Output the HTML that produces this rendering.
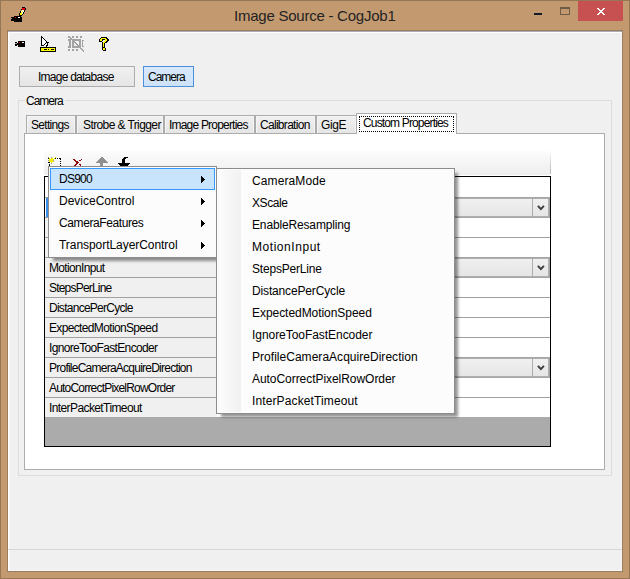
<!DOCTYPE html>
<html><head><meta charset="utf-8">
<style>
*{box-sizing:border-box;margin:0;padding:0}
html,body{width:630px;height:579px;overflow:hidden;background:#c39a70}
body{position:relative;font-family:"Liberation Sans",sans-serif;font-size:12px;color:#000}
.a{position:absolute}
.t{position:absolute;white-space:nowrap;line-height:normal;color:#000}
svg{position:absolute;display:block}
</style></head><body>
<div class="a" style="left:0px;top:0px;width:630px;height:579px;border:1px solid #957655"></div>
<svg class="a" style="left:10px;top:6px" width="17" height="16" shape-rendering="crispEdges"><rect x="12" y="1" width="3" height="1" fill="#000"/><rect x="15" y="1" width="1" height="1" fill="#999"/><rect x="12" y="2" width="3" height="1" fill="#e00"/><rect x="15" y="2" width="1" height="1" fill="#000"/><rect x="11" y="3" width="1" height="1" fill="#000"/><rect x="12" y="3" width="3" height="1" fill="#e00"/><rect x="15" y="3" width="1" height="1" fill="#000"/><rect x="12" y="4" width="2" height="1" fill="#fff"/><rect x="14" y="4" width="1" height="1" fill="#000"/><rect x="10" y="5" width="1" height="1" fill="#000"/><rect x="11" y="5" width="1" height="1" fill="#fff"/><rect x="12" y="5" width="1" height="1" fill="#ff0"/><rect x="13" y="5" width="1" height="1" fill="#fff"/><rect x="14" y="5" width="1" height="1" fill="#000"/><rect x="10" y="6" width="1" height="1" fill="#000"/><rect x="11" y="6" width="1" height="1" fill="#ff0"/><rect x="12" y="6" width="1" height="1" fill="#fff"/><rect x="13" y="6" width="1" height="1" fill="#000"/><rect x="9" y="7" width="1" height="1" fill="#000"/><rect x="10" y="7" width="2" height="1" fill="#ff0"/><rect x="12" y="7" width="1" height="1" fill="#fff"/><rect x="13" y="7" width="1" height="1" fill="#000"/><rect x="9" y="8" width="1" height="1" fill="#000"/><rect x="10" y="8" width="2" height="1" fill="#ff0"/><rect x="12" y="8" width="1" height="1" fill="#000"/><rect x="9" y="9" width="3" height="1" fill="#000"/><rect x="4" y="10" width="7" height="1" fill="#000"/><rect x="11" y="10" width="1" height="1" fill="#999"/><rect x="1" y="11" width="4" height="1" fill="#000"/><rect x="5" y="11" width="1" height="1" fill="#e00"/><rect x="6" y="11" width="2" height="1" fill="#000"/><rect x="8" y="11" width="2" height="1" fill="#fff"/><rect x="10" y="11" width="2" height="1" fill="#000"/><rect x="1" y="12" width="1" height="1" fill="#999"/><rect x="2" y="12" width="10" height="1" fill="#000"/><rect x="1" y="13" width="11" height="1" fill="#000"/><rect x="1" y="14" width="11" height="1" fill="#000"/><rect x="4" y="15" width="8" height="1" fill="#000"/></svg>
<div class="t" style="left:234px;top:7px;font-size:15px;letter-spacing:-0.24px;color:#232323">Image Source - CogJob1</div>
<div class="a" style="left:534px;top:13px;width:8px;height:2px;background:#141a26"></div>
<div class="a" style="left:560px;top:7px;width:10px;height:8px;border:1px solid #6e5c47;border-top-width:2px"></div>
<div class="a" style="left:578px;top:1px;width:45px;height:20px;background:#c75050"></div>
<svg class="a" style="left:597px;top:8px" width="8" height="7" shape-rendering="crispEdges"><rect x="0" y="0" width="2" height="1" fill="#fff"/><rect x="6" y="0" width="2" height="1" fill="#fff"/><rect x="1" y="1" width="2" height="1" fill="#fff"/><rect x="5" y="1" width="2" height="1" fill="#fff"/><rect x="2" y="2" width="4" height="1" fill="#fff"/><rect x="3" y="3" width="2" height="1" fill="#fff"/><rect x="2" y="4" width="4" height="1" fill="#fff"/><rect x="1" y="5" width="2" height="1" fill="#fff"/><rect x="5" y="5" width="2" height="1" fill="#fff"/><rect x="0" y="6" width="2" height="1" fill="#fff"/><rect x="6" y="6" width="2" height="1" fill="#fff"/></svg>
<div class="a" style="left:7px;top:30px;width:616px;height:542px;border:1px solid #9c7d5c;background:#f0f0f0"></div>
<div class="a" style="left:8px;top:32px;width:614px;height:539px;border:1px solid #fff;border-right-color:#f5f6f9;border-bottom-color:#f5f6f9"></div>
<div class="a" style="left:8px;top:31px;width:614px;height:1px;background:#a9afb7"></div>
<div class="a" style="left:9px;top:33px;width:1px;height:537px;background:#f4f6f9"></div>
<svg class="a" style="left:12px;top:41px" width="13" height="6" shape-rendering="crispEdges"><rect x="6" y="0" width="7" height="1" fill="#000"/><rect x="3" y="1" width="2" height="1" fill="#000"/><rect x="6" y="1" width="1" height="1" fill="#000"/><rect x="7" y="1" width="1" height="1" fill="#e00"/><rect x="8" y="1" width="2" height="1" fill="#000"/><rect x="10" y="1" width="2" height="1" fill="#fff"/><rect x="12" y="1" width="1" height="1" fill="#000"/><rect x="3" y="2" width="2" height="1" fill="#999"/><rect x="5" y="2" width="8" height="1" fill="#000"/><rect x="3" y="3" width="10" height="1" fill="#000"/><rect x="3" y="4" width="2" height="1" fill="#000"/><rect x="6" y="4" width="7" height="1" fill="#000"/><rect x="6" y="5" width="7" height="1" fill="#000"/></svg>
<svg class="a" style="left:40px;top:36px" width="17" height="16" shape-rendering="crispEdges"><rect x="1" y="0" width="1" height="1" fill="#000"/><rect x="1" y="1" width="2" height="1" fill="#000"/><rect x="1" y="2" width="1" height="1" fill="#000"/><rect x="2" y="2" width="1" height="1" fill="#fff"/><rect x="3" y="2" width="1" height="1" fill="#000"/><rect x="1" y="3" width="1" height="1" fill="#000"/><rect x="2" y="3" width="2" height="1" fill="#fff"/><rect x="4" y="3" width="1" height="1" fill="#000"/><rect x="1" y="4" width="1" height="1" fill="#000"/><rect x="2" y="4" width="3" height="1" fill="#fff"/><rect x="5" y="4" width="1" height="1" fill="#000"/><rect x="1" y="5" width="1" height="1" fill="#000"/><rect x="2" y="5" width="4" height="1" fill="#fff"/><rect x="6" y="5" width="1" height="1" fill="#000"/><rect x="1" y="6" width="1" height="1" fill="#000"/><rect x="2" y="6" width="4" height="1" fill="#fff"/><rect x="6" y="6" width="3" height="1" fill="#000"/><rect x="1" y="7" width="1" height="1" fill="#000"/><rect x="2" y="7" width="3" height="1" fill="#fff"/><rect x="5" y="7" width="1" height="1" fill="#000"/><rect x="6" y="7" width="1" height="1" fill="#fff"/><rect x="7" y="7" width="1" height="1" fill="#000"/><rect x="1" y="8" width="1" height="1" fill="#000"/><rect x="2" y="8" width="2" height="1" fill="#fff"/><rect x="4" y="8" width="1" height="1" fill="#000"/><rect x="5" y="8" width="2" height="1" fill="#fff"/><rect x="7" y="8" width="1" height="1" fill="#000"/><rect x="1" y="9" width="3" height="1" fill="#000"/><rect x="5" y="9" width="1" height="1" fill="#fff"/><rect x="6" y="9" width="2" height="1" fill="#000"/><rect x="6" y="10" width="1" height="1" fill="#000"/><rect x="0" y="11" width="16" height="1" fill="#000"/><rect x="0" y="12" width="1" height="1" fill="#000"/><rect x="1" y="12" width="14" height="1" fill="#ff0"/><rect x="15" y="12" width="1" height="1" fill="#000"/><rect x="0" y="13" width="1" height="1" fill="#000"/><rect x="1" y="13" width="3" height="1" fill="#ff0"/><rect x="4" y="13" width="3" height="1" fill="#000"/><rect x="7" y="13" width="1" height="1" fill="#ff0"/><rect x="8" y="13" width="1" height="1" fill="#000"/><rect x="9" y="13" width="2" height="1" fill="#ff0"/><rect x="11" y="13" width="3" height="1" fill="#000"/><rect x="14" y="13" width="1" height="1" fill="#ff0"/><rect x="15" y="13" width="1" height="1" fill="#000"/><rect x="0" y="14" width="1" height="1" fill="#000"/><rect x="1" y="14" width="14" height="1" fill="#ff0"/><rect x="15" y="14" width="1" height="1" fill="#000"/><rect x="0" y="15" width="16" height="1" fill="#000"/></svg>
<svg class="a" style="left:68px;top:36px" width="16" height="16" shape-rendering="crispEdges"><rect x="0" y="0" width="2" height="1" fill="#a3a3a3"/><rect x="4" y="0" width="2" height="1" fill="#a3a3a3"/><rect x="8" y="0" width="2" height="1" fill="#a3a3a3"/><rect x="12" y="0" width="2" height="1" fill="#a3a3a3"/><rect x="0" y="1" width="3" height="1" fill="#a3a3a3"/><rect x="4" y="1" width="2" height="1" fill="#a3a3a3"/><rect x="8" y="1" width="2" height="1" fill="#a3a3a3"/><rect x="12" y="1" width="2" height="1" fill="#a3a3a3"/><rect x="2" y="2" width="2" height="1" fill="#a3a3a3"/><rect x="0" y="3" width="13" height="1" fill="#a3a3a3"/><rect x="0" y="4" width="3" height="1" fill="#a3a3a3"/><rect x="4" y="4" width="9" height="1" fill="#a3a3a3"/><rect x="14" y="4" width="2" height="1" fill="#a3a3a3"/><rect x="1" y="5" width="2" height="1" fill="#a3a3a3"/><rect x="4" y="5" width="3" height="1" fill="#a3a3a3"/><rect x="11" y="5" width="2" height="1" fill="#a3a3a3"/><rect x="14" y="5" width="1" height="1" fill="#a3a3a3"/><rect x="1" y="6" width="2" height="1" fill="#a3a3a3"/><rect x="4" y="6" width="4" height="1" fill="#a3a3a3"/><rect x="11" y="6" width="2" height="1" fill="#a3a3a3"/><rect x="14" y="6" width="1" height="1" fill="#a3a3a3"/><rect x="1" y="7" width="2" height="1" fill="#a3a3a3"/><rect x="4" y="7" width="2" height="1" fill="#a3a3a3"/><rect x="7" y="7" width="2" height="1" fill="#a3a3a3"/><rect x="11" y="7" width="2" height="1" fill="#a3a3a3"/><rect x="14" y="7" width="1" height="1" fill="#a3a3a3"/><rect x="1" y="8" width="2" height="1" fill="#a3a3a3"/><rect x="4" y="8" width="2" height="1" fill="#a3a3a3"/><rect x="8" y="8" width="2" height="1" fill="#a3a3a3"/><rect x="11" y="8" width="2" height="1" fill="#a3a3a3"/><rect x="14" y="8" width="1" height="1" fill="#a3a3a3"/><rect x="1" y="9" width="2" height="1" fill="#a3a3a3"/><rect x="4" y="9" width="2" height="1" fill="#a3a3a3"/><rect x="9" y="9" width="4" height="1" fill="#a3a3a3"/><rect x="14" y="9" width="1" height="1" fill="#a3a3a3"/><rect x="0" y="10" width="3" height="1" fill="#a3a3a3"/><rect x="4" y="10" width="9" height="1" fill="#a3a3a3"/><rect x="14" y="10" width="2" height="1" fill="#a3a3a3"/><rect x="0" y="11" width="3" height="1" fill="#a3a3a3"/><rect x="4" y="11" width="9" height="1" fill="#a3a3a3"/><rect x="12" y="12" width="2" height="1" fill="#a3a3a3"/><rect x="0" y="13" width="2" height="1" fill="#a3a3a3"/><rect x="4" y="13" width="2" height="1" fill="#a3a3a3"/><rect x="8" y="13" width="2" height="1" fill="#a3a3a3"/><rect x="13" y="13" width="2" height="1" fill="#a3a3a3"/><rect x="0" y="14" width="2" height="1" fill="#a3a3a3"/><rect x="4" y="14" width="2" height="1" fill="#a3a3a3"/><rect x="8" y="14" width="2" height="1" fill="#a3a3a3"/><rect x="14" y="14" width="2" height="1" fill="#a3a3a3"/><rect x="15" y="15" width="1" height="1" fill="#a3a3a3"/></svg>
<svg class="a" style="left:98px;top:37px" width="11" height="14" shape-rendering="crispEdges"><rect x="3" y="0" width="6" height="1" fill="#000"/><rect x="2" y="1" width="1" height="1" fill="#000"/><rect x="3" y="1" width="5" height="1" fill="#ff0"/><rect x="8" y="1" width="2" height="1" fill="#000"/><rect x="1" y="2" width="1" height="1" fill="#000"/><rect x="2" y="2" width="2" height="1" fill="#ff0"/><rect x="4" y="2" width="3" height="1" fill="#000"/><rect x="7" y="2" width="2" height="1" fill="#ff0"/><rect x="9" y="2" width="2" height="1" fill="#000"/><rect x="1" y="3" width="1" height="1" fill="#000"/><rect x="2" y="3" width="2" height="1" fill="#ff0"/><rect x="4" y="3" width="1" height="1" fill="#000"/><rect x="7" y="3" width="2" height="1" fill="#ff0"/><rect x="9" y="3" width="2" height="1" fill="#000"/><rect x="1" y="4" width="3" height="1" fill="#000"/><rect x="6" y="4" width="2" height="1" fill="#ff0"/><rect x="8" y="4" width="2" height="1" fill="#000"/><rect x="4" y="5" width="1" height="1" fill="#000"/><rect x="5" y="5" width="2" height="1" fill="#ff0"/><rect x="7" y="5" width="2" height="1" fill="#000"/><rect x="4" y="6" width="1" height="1" fill="#000"/><rect x="5" y="6" width="1" height="1" fill="#ff0"/><rect x="6" y="6" width="1" height="1" fill="#000"/><rect x="4" y="7" width="1" height="1" fill="#000"/><rect x="5" y="7" width="1" height="1" fill="#ff0"/><rect x="6" y="7" width="1" height="1" fill="#000"/><rect x="4" y="8" width="1" height="1" fill="#000"/><rect x="5" y="8" width="1" height="1" fill="#ff0"/><rect x="6" y="8" width="1" height="1" fill="#000"/><rect x="4" y="9" width="1" height="1" fill="#000"/><rect x="5" y="9" width="1" height="1" fill="#ff0"/><rect x="6" y="9" width="1" height="1" fill="#000"/><rect x="4" y="10" width="3" height="1" fill="#000"/><rect x="4" y="11" width="1" height="1" fill="#000"/><rect x="5" y="11" width="2" height="1" fill="#ff0"/><rect x="7" y="11" width="1" height="1" fill="#000"/><rect x="4" y="12" width="1" height="1" fill="#000"/><rect x="5" y="12" width="2" height="1" fill="#ff0"/><rect x="7" y="12" width="1" height="1" fill="#000"/><rect x="5" y="13" width="3" height="1" fill="#000"/></svg>
<div class="a" style="left:19px;top:66px;width:116px;height:21px;border:1px solid #adadad;background:linear-gradient(#f0f0f0,#e5e5e5)"></div>
<div class="t" style="left:38px;top:70px;font-size:12px;letter-spacing:-0.75px;">Image database</div>
<div class="a" style="left:143px;top:66px;width:51px;height:21px;border:1px solid #4d8fdb;background:linear-gradient(#d8e8fa,#cde2f8)"></div>
<div class="t" style="left:148px;top:70px;font-size:12px;letter-spacing:-1.0px;">Camera</div>
<div class="a" style="left:18px;top:100px;width:594px;height:376px;border:1px solid #dcdcdc"></div>
<div class="a" style="left:25px;top:95px;width:40px;height:12px;background:#f0f0f0"></div>
<div class="t" style="left:26px;top:94px;font-size:12px;letter-spacing:-1.0px;">Camera</div>
<div class="a" style="left:24px;top:133px;width:581px;height:337px;border:1px solid #acacac;background:#fff"></div>
<div class="a" style="left:26px;top:115px;width:50px;height:18px;border:1px solid #acacac;border-bottom:none;background:linear-gradient(#f0f0f0,#e5e5e5);box-shadow:inset 1px 1px 0 #f5f5f5,inset -1px 0 0 #f4f4f4;"></div>
<div class="a" style="left:76px;top:115px;width:88px;height:18px;border:1px solid #acacac;border-bottom:none;background:linear-gradient(#f0f0f0,#e5e5e5);box-shadow:inset 1px 1px 0 #f5f5f5,inset -1px 0 0 #f4f4f4;"></div>
<div class="a" style="left:164px;top:115px;width:91px;height:18px;border:1px solid #acacac;border-bottom:none;background:linear-gradient(#f0f0f0,#e5e5e5);box-shadow:inset 1px 1px 0 #f5f5f5,inset -1px 0 0 #f4f4f4;"></div>
<div class="a" style="left:255px;top:115px;width:61px;height:18px;border:1px solid #acacac;border-bottom:none;background:linear-gradient(#f0f0f0,#e5e5e5);box-shadow:inset 1px 1px 0 #f5f5f5,inset -1px 0 0 #f4f4f4;"></div>
<div class="a" style="left:316px;top:115px;width:40px;height:18px;border:1px solid #acacac;border-bottom:none;background:linear-gradient(#f0f0f0,#e5e5e5);box-shadow:inset 1px 1px 0 #f5f5f5,inset -1px 0 0 #f4f4f4;border-right:none;"></div>
<div class="a" style="left:356px;top:113px;width:101px;height:21px;border:1px solid #acacac;border-bottom:none;background:#fff"></div>
<div class="a" style="left:359px;top:116px;width:95px;height:16px;border:1px dotted #000"></div>
<div class="t" style="left:31px;top:118px;font-size:12px;letter-spacing:-0.7px;">Settings</div>
<div class="t" style="left:83px;top:118px;font-size:12px;letter-spacing:-0.6px;">Strobe &amp; Trigger</div>
<div class="t" style="left:169px;top:118px;font-size:12px;letter-spacing:-0.8px;">Image Properties</div>
<div class="t" style="left:260px;top:118px;font-size:12px;letter-spacing:-0.7px;">Calibration</div>
<div class="t" style="left:321px;top:118px;font-size:12px;letter-spacing:-0.4px;">GigE</div>
<div class="t" style="left:363px;top:116px;font-size:12px;letter-spacing:-0.85px;">Custom Properties</div>
<div class="a" style="left:44px;top:151px;width:507px;height:24px;background:linear-gradient(#fcfcfc,#eeeeee);border-radius:2px"></div>
<div class="a" style="left:550px;top:152px;width:1px;height:22px;background:linear-gradient(rgba(160,160,160,0),#b4b4b4)"></div>
<svg class="a" style="left:46px;top:157px" width="15" height="9" shape-rendering="crispEdges"><rect x="2" y="0" width="1" height="1" fill="#9a9a9a"/><rect x="5" y="0" width="1" height="1" fill="#9a9a9a"/><rect x="9" y="0" width="1" height="1" fill="#f0ec00"/><rect x="2" y="1" width="1" height="1" fill="#000"/><rect x="3" y="1" width="1" height="1" fill="#f0ec00"/><rect x="5" y="1" width="2" height="1" fill="#f0ec00"/><rect x="8" y="1" width="1" height="1" fill="#f0ec00"/><rect x="9" y="1" width="1" height="1" fill="#000"/><rect x="11" y="1" width="1" height="1" fill="#000"/><rect x="13" y="1" width="2" height="1" fill="#000"/><rect x="3" y="2" width="5" height="1" fill="#f0ec00"/><rect x="14" y="2" width="1" height="1" fill="#000"/><rect x="2" y="3" width="1" height="1" fill="#9a9a9a"/><rect x="3" y="3" width="4" height="1" fill="#f0ec00"/><rect x="7" y="3" width="1" height="1" fill="#9a9a9a"/><rect x="3" y="4" width="5" height="1" fill="#f0ec00"/><rect x="14" y="4" width="1" height="1" fill="#000"/><rect x="2" y="5" width="2" height="1" fill="#000"/><rect x="5" y="5" width="1" height="1" fill="#f0ec00"/><rect x="5" y="6" width="1" height="1" fill="#9a9a9a"/><rect x="14" y="6" width="1" height="1" fill="#000"/><rect x="3" y="7" width="1" height="1" fill="#000"/><rect x="3" y="8" width="1" height="1" fill="#000"/><rect x="14" y="8" width="1" height="1" fill="#000"/></svg>
<svg class="a" style="left:73px;top:159px" width="9" height="7" shape-rendering="crispEdges"><rect x="0" y="0" width="2" height="1" fill="#8e0a0a"/><rect x="8" y="0" width="1" height="1" fill="#8e0a0a"/><rect x="1" y="1" width="2" height="1" fill="#8e0a0a"/><rect x="6" y="1" width="2" height="1" fill="#8e0a0a"/><rect x="2" y="2" width="3" height="1" fill="#8e0a0a"/><rect x="3" y="3" width="3" height="1" fill="#8e0a0a"/><rect x="3" y="4" width="2" height="1" fill="#8e0a0a"/><rect x="2" y="5" width="2" height="1" fill="#8e0a0a"/><rect x="6" y="5" width="2" height="1" fill="#8e0a0a"/><rect x="1" y="6" width="2" height="1" fill="#8e0a0a"/><rect x="7" y="6" width="1" height="1" fill="#8e0a0a"/></svg>
<svg class="a" style="left:96px;top:157px" width="12" height="9" shape-rendering="crispEdges"><rect x="5" y="0" width="2" height="1" fill="#8f8f8f"/><rect x="4" y="1" width="4" height="1" fill="#8f8f8f"/><rect x="3" y="2" width="6" height="1" fill="#8f8f8f"/><rect x="2" y="3" width="8" height="1" fill="#8f8f8f"/><rect x="1" y="4" width="10" height="1" fill="#8f8f8f"/><rect x="0" y="5" width="12" height="1" fill="#8f8f8f"/><rect x="4" y="6" width="3" height="1" fill="#8f8f8f"/><rect x="4" y="7" width="3" height="1" fill="#8f8f8f"/><rect x="4" y="8" width="3" height="1" fill="#8f8f8f"/></svg>
<svg class="a" style="left:118px;top:157px" width="12" height="9" shape-rendering="crispEdges"><rect x="6" y="0" width="4" height="1" fill="#000"/><rect x="5" y="1" width="3" height="1" fill="#000"/><rect x="4" y="2" width="3" height="1" fill="#000"/><rect x="4" y="3" width="3" height="1" fill="#000"/><rect x="4" y="4" width="3" height="1" fill="#000"/><rect x="4" y="5" width="3" height="1" fill="#000"/><rect x="0" y="6" width="12" height="1" fill="#000"/><rect x="1" y="7" width="10" height="1" fill="#000"/><rect x="2" y="8" width="8" height="1" fill="#000"/></svg>
<div class="a" style="left:44px;top:176px;width:507px;height:271px;border:1px solid #000;background:#ababab"></div>
<div class="a" style="left:45px;top:177px;width:505px;height:240px;background:#fff"></div>
<div class="a" style="left:45px;top:177px;width:172px;height:240px;background:#f0f0f0"></div>
<div class="a" style="left:45px;top:177px;width:3px;height:20px;background:#fff"></div>
<div class="a" style="left:46px;top:197px;width:2px;height:20px;background:#3b8fe8"></div>
<div class="a" style="left:45px;top:197px;width:1px;height:20px;background:#fff"></div>
<div class="a" style="left:45px;top:197px;width:505px;height:1px;background:#a0a0a0"></div>
<div class="a" style="left:45px;top:217px;width:505px;height:1px;background:#a0a0a0"></div>
<div class="a" style="left:45px;top:237px;width:505px;height:1px;background:#a0a0a0"></div>
<div class="a" style="left:45px;top:257px;width:505px;height:1px;background:#a0a0a0"></div>
<div class="a" style="left:45px;top:277px;width:505px;height:1px;background:#a0a0a0"></div>
<div class="a" style="left:45px;top:297px;width:505px;height:1px;background:#a0a0a0"></div>
<div class="a" style="left:45px;top:317px;width:505px;height:1px;background:#a0a0a0"></div>
<div class="a" style="left:45px;top:337px;width:505px;height:1px;background:#a0a0a0"></div>
<div class="a" style="left:45px;top:357px;width:505px;height:1px;background:#a0a0a0"></div>
<div class="a" style="left:45px;top:377px;width:505px;height:1px;background:#a0a0a0"></div>
<div class="a" style="left:45px;top:397px;width:505px;height:1px;background:#a0a0a0"></div>
<div class="a" style="left:217px;top:197px;width:333px;height:21px;border:1px solid #a4a4a4;border-left:none"></div>
<div class="a" style="left:217px;top:198px;width:332px;height:19px;border:1px solid #b0b0b0;border-left:none;background:linear-gradient(#f0f0f0,#e5e5e5)"></div>
<div class="a" style="left:532px;top:198px;width:1px;height:19px;background:#acacac"></div>
<svg style="left:537px;top:205px" width="8" height="6" viewBox="0 0 8 6"><path d="M0.9 0.9 L3.9 4.1 L6.9 0.9" stroke="#3c3c3c" stroke-width="2" fill="none"/></svg>
<div class="a" style="left:217px;top:257px;width:333px;height:21px;border:1px solid #a4a4a4;border-left:none"></div>
<div class="a" style="left:217px;top:258px;width:332px;height:19px;border:1px solid #b0b0b0;border-left:none;background:linear-gradient(#f0f0f0,#e5e5e5)"></div>
<div class="a" style="left:532px;top:258px;width:1px;height:19px;background:#acacac"></div>
<svg style="left:537px;top:265px" width="8" height="6" viewBox="0 0 8 6"><path d="M0.9 0.9 L3.9 4.1 L6.9 0.9" stroke="#3c3c3c" stroke-width="2" fill="none"/></svg>
<div class="a" style="left:217px;top:357px;width:333px;height:21px;border:1px solid #a4a4a4;border-left:none"></div>
<div class="a" style="left:217px;top:358px;width:332px;height:19px;border:1px solid #b0b0b0;border-left:none;background:linear-gradient(#f0f0f0,#e5e5e5)"></div>
<div class="a" style="left:532px;top:358px;width:1px;height:19px;background:#acacac"></div>
<svg style="left:537px;top:365px" width="8" height="6" viewBox="0 0 8 6"><path d="M0.9 0.9 L3.9 4.1 L6.9 0.9" stroke="#3c3c3c" stroke-width="2" fill="none"/></svg>
<div class="t" style="left:49px;top:261px;font-size:12px;letter-spacing:-0.65px;">MotionInput</div>
<div class="t" style="left:49px;top:281px;font-size:12px;letter-spacing:-0.8px;">StepsPerLine</div>
<div class="t" style="left:49px;top:301px;font-size:12px;letter-spacing:-0.73px;">DistancePerCycle</div>
<div class="t" style="left:49px;top:321px;font-size:12px;letter-spacing:-0.65px;">ExpectedMotionSpeed</div>
<div class="t" style="left:49px;top:341px;font-size:12px;letter-spacing:-0.65px;">IgnoreTooFastEncoder</div>
<div class="t" style="left:49px;top:361px;font-size:12px;letter-spacing:-0.76px;">ProfileCameraAcquireDirection</div>
<div class="t" style="left:49px;top:381px;font-size:12px;letter-spacing:-0.8px;">AutoCorrectPixelRowOrder</div>
<div class="t" style="left:49px;top:401px;font-size:12px;letter-spacing:-0.6px;">InterPacketTimeout</div>
<div class="a" style="left:53px;top:171px;width:167px;height:90px;background:rgba(0,0,0,0.42);filter:blur(1.5px)"></div>
<div class="a" style="left:48px;top:166px;width:169px;height:92px;border:1px solid #8c8c8c;background:#fcfcfc;"></div>
<div class="a" style="left:50px;top:168px;width:165px;height:22px;border:1px solid #3399ff;background:#c8e4fd"></div>
<div class="t" style="left:59px;top:172px;font-size:12px;letter-spacing:-0.75px;">DS900</div>
<svg class="a" style="left:201px;top:176px" width="4" height="7" shape-rendering="crispEdges"><rect x="0" y="0" width="1" height="1" fill="#000"/><rect x="0" y="1" width="2" height="1" fill="#000"/><rect x="0" y="2" width="3" height="1" fill="#000"/><rect x="0" y="3" width="4" height="1" fill="#000"/><rect x="0" y="4" width="3" height="1" fill="#000"/><rect x="0" y="5" width="2" height="1" fill="#000"/><rect x="0" y="6" width="1" height="1" fill="#000"/></svg>
<div class="t" style="left:59px;top:194px;font-size:12px;letter-spacing:0px;">DeviceControl</div>
<svg class="a" style="left:201px;top:198px" width="4" height="7" shape-rendering="crispEdges"><rect x="0" y="0" width="1" height="1" fill="#000"/><rect x="0" y="1" width="2" height="1" fill="#000"/><rect x="0" y="2" width="3" height="1" fill="#000"/><rect x="0" y="3" width="4" height="1" fill="#000"/><rect x="0" y="4" width="3" height="1" fill="#000"/><rect x="0" y="5" width="2" height="1" fill="#000"/><rect x="0" y="6" width="1" height="1" fill="#000"/></svg>
<div class="t" style="left:59px;top:216px;font-size:12px;letter-spacing:-0.4px;">CameraFeatures</div>
<svg class="a" style="left:201px;top:220px" width="4" height="7" shape-rendering="crispEdges"><rect x="0" y="0" width="1" height="1" fill="#000"/><rect x="0" y="1" width="2" height="1" fill="#000"/><rect x="0" y="2" width="3" height="1" fill="#000"/><rect x="0" y="3" width="4" height="1" fill="#000"/><rect x="0" y="4" width="3" height="1" fill="#000"/><rect x="0" y="5" width="2" height="1" fill="#000"/><rect x="0" y="6" width="1" height="1" fill="#000"/></svg>
<div class="t" style="left:59px;top:238px;font-size:12px;letter-spacing:-0.05px;">TransportLayerControl</div>
<svg class="a" style="left:201px;top:242px" width="4" height="7" shape-rendering="crispEdges"><rect x="0" y="0" width="1" height="1" fill="#000"/><rect x="0" y="1" width="2" height="1" fill="#000"/><rect x="0" y="2" width="3" height="1" fill="#000"/><rect x="0" y="3" width="4" height="1" fill="#000"/><rect x="0" y="4" width="3" height="1" fill="#000"/><rect x="0" y="5" width="2" height="1" fill="#000"/><rect x="0" y="6" width="1" height="1" fill="#000"/></svg>
<div class="a" style="left:221px;top:173px;width:237px;height:244px;background:rgba(0,0,0,0.42);filter:blur(1.5px)"></div>
<div class="a" style="left:216px;top:168px;width:239px;height:246px;border:1px solid #8c8c8c;background:#fcfcfc;"></div>
<div class="a" style="left:218px;top:170px;width:23px;height:242px;background:linear-gradient(90deg,#fcfcfc,#f1f1f1)"></div>
<div class="t" style="left:252px;top:174px;font-size:12px;letter-spacing:0.1px;">CameraMode</div>
<div class="t" style="left:252px;top:196px;font-size:12px;letter-spacing:-0.4px;">XScale</div>
<div class="t" style="left:252px;top:218px;font-size:12px;letter-spacing:-0.15px;">EnableResampling</div>
<div class="t" style="left:252px;top:240px;font-size:12px;letter-spacing:0.55px;">MotionInput</div>
<div class="t" style="left:252px;top:262px;font-size:12px;letter-spacing:-0.2px;">StepsPerLine</div>
<div class="t" style="left:252px;top:284px;font-size:12px;letter-spacing:-0.15px;">DistancePerCycle</div>
<div class="t" style="left:252px;top:306px;font-size:12px;letter-spacing:-0.05px;">ExpectedMotionSpeed</div>
<div class="t" style="left:252px;top:328px;font-size:12px;letter-spacing:-0.05px;">IgnoreTooFastEncoder</div>
<div class="t" style="left:252px;top:350px;font-size:12px;letter-spacing:0.03px;">ProfileCameraAcquireDirection</div>
<div class="t" style="left:252px;top:372px;font-size:12px;letter-spacing:-0.05px;">AutoCorrectPixelRowOrder</div>
<div class="t" style="left:252px;top:394px;font-size:12px;letter-spacing:0.12px;">InterPacketTimeout</div>
<div class="a" style="left:8px;top:549px;width:614px;height:1px;background:#d7d7d7"></div>
</body></html>
